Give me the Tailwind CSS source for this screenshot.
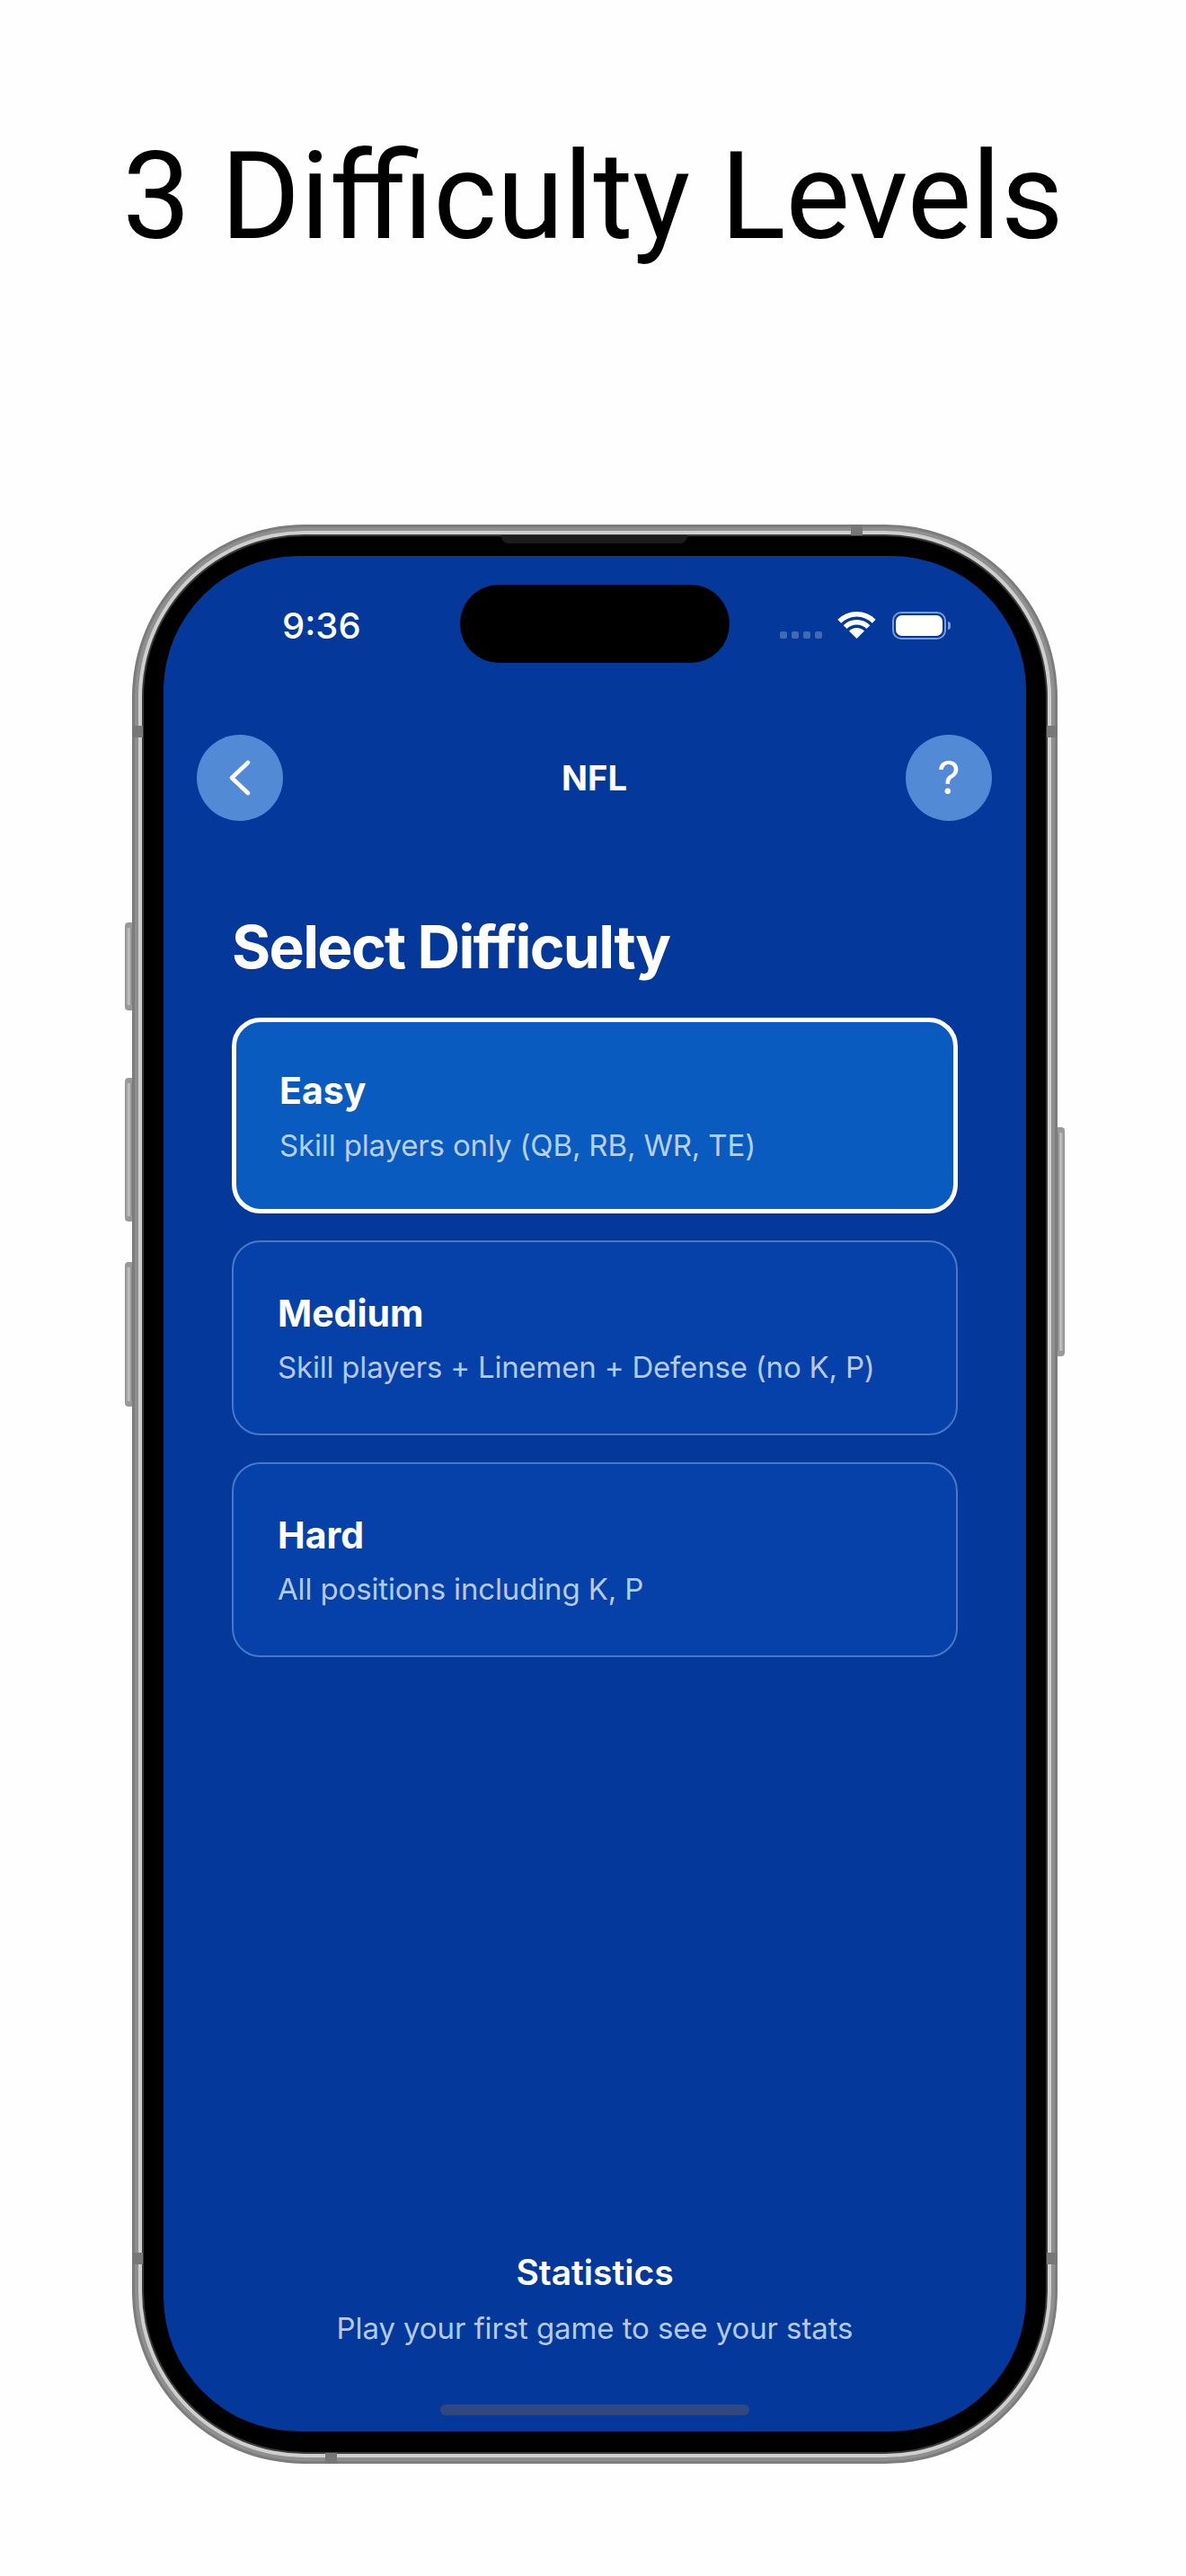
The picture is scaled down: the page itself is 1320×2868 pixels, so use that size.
<!DOCTYPE html>
<html>
<head>
<meta charset="utf-8">
<script src="https://cdn.jsdelivr.net/npm/@tailwindcss/browser@4"></script>
</head>
<body class="bg-[#fefefe] m-0">
<div class="w-[1320px] h-[2868px] overflow-hidden font-['Inter',sans-serif]">
  <div class="h-[584px] pt-[139px]">
    <h1 class="text-center font-['Roboto',sans-serif] font-normal text-[135px] leading-[160px] text-black">3 Difficulty Levels</h1>
  </div>

  <div class="relative ml-[147px] w-[1030px] h-[2159px]">
    <!-- side buttons -->
    <div class="absolute left-[-8px] top-[443px] w-[9px] h-[98px] rounded-l-[4px] bg-gradient-to-r from-[#8a8a8a] via-[#c4c4c4] to-[#6f6f6f] border-y-[6px] border-[#999]"></div>
    <div class="absolute left-[-8px] top-[616px] w-[9px] h-[160px] rounded-l-[4px] bg-gradient-to-r from-[#8a8a8a] via-[#c4c4c4] to-[#6f6f6f] border-y-[6px] border-[#999]"></div>
    <div class="absolute left-[-8px] top-[821px] w-[9px] h-[161px] rounded-l-[4px] bg-gradient-to-r from-[#8a8a8a] via-[#c4c4c4] to-[#6f6f6f] border-y-[6px] border-[#999]"></div>
    <div class="absolute right-[-8px] top-[671px] w-[9px] h-[255px] rounded-r-[4px] bg-gradient-to-l from-[#8a8a8a] via-[#c4c4c4] to-[#6f6f6f] border-y-[6px] border-[#999]"></div>

    <!-- titanium frame: nested rings -->
    <div class="relative h-full rounded-[192px] bg-[#7c7c7c] p-[3px]">
      <div class="h-full rounded-[189px] bg-[#8f8f8f] p-[4px]">
        <div class="h-full rounded-[185px] bg-[#cfcfcf] p-[4px]">
          <div class="h-full rounded-[181px] bg-[#3a3a3a] p-[2px]">
            <div class="h-full rounded-[179px] bg-black p-[22px]">

              <!-- screen -->
              <div class="relative h-[2088px] rounded-[150px] overflow-hidden bg-[#04399b] text-white">
                <!-- dynamic island -->
                <div class="absolute left-[330px] top-[32px] w-[300px] h-[87px] rounded-full bg-black"></div>

                <!-- status bar -->
                <div class="h-[199px] pt-[55px] pl-[132px] pr-[84px] flex justify-between items-start">
                  <span class="text-[40px] leading-[46px] font-medium text-white">9:36</span>
                  <div class="flex items-end gap-[17px] mt-[6px] h-[32px]">
                    <div class="flex gap-[5px] mb-[1px]">
                      <i class="block w-[8px] h-[8px] rounded-[2px] bg-[#4169b4]"></i>
                      <i class="block w-[8px] h-[8px] rounded-[2px] bg-[#4169b4]"></i>
                      <i class="block w-[8px] h-[8px] rounded-[2px] bg-[#4169b4]"></i>
                      <i class="block w-[8px] h-[8px] rounded-[2px] bg-[#4169b4]"></i>
                    </div>
                    <svg width="43" height="32" viewBox="-1 0 43 32" class="block">
                      <path d="M-0.7 9.8 A30 30 0 0 1 41.7 9.8 L37.8 13.7 A24.5 24.5 0 0 0 3.2 13.7 Z" fill="#fff"/>
                      <path d="M5.65 16.15 A21 21 0 0 1 35.35 16.15 L31.46 20.04 A15.5 15.5 0 0 0 9.54 20.04 Z" fill="#fff"/>
                      <path d="M12 22.5 A12 12 0 0 1 29 22.5 L20.5 31 Z" fill="#fff"/>
                    </svg>
                    <div class="flex items-center gap-[2px] ml-[1px]">
                      <div class="w-[60px] h-[31px] rounded-[10px] border-[2px] border-[#7b9bd3] p-[2px]">
                        <div class="h-full rounded-[7px] bg-white"></div>
                      </div>
                      <div class="w-[3px] h-[9px] rounded-r-[3px] bg-[#7b9bd3]"></div>
                    </div>
                  </div>
                </div>

                <!-- nav -->
                <div class="h-[96px] pl-[37px] pr-[38px] flex items-center justify-between">
                  <div class="w-[96px] h-[96px] rounded-full bg-[#528ad6] flex items-center justify-center">
                    <svg width="24" height="40" viewBox="0 0 24 40" fill="none" stroke="#fff" stroke-width="4.5" stroke-linecap="round" stroke-linejoin="round"><path d="M21 3 L3 20 L21 37"/></svg>
                  </div>
                  <span class="text-[38px] leading-[44px] font-bold">NFL</span>
                  <div class="w-[96px] h-[96px] rounded-full bg-[#528ad6] flex items-center justify-center text-[50px] leading-[50px] font-normal">?</div>
                </div>

                <!-- content -->
                <div class="mt-[104px] px-[76px]">
                  <h2 class="text-[66px] leading-[72px] font-bold tracking-[-1.7px]">Select Difficulty</h2>
                  <div class="mt-[43px] flex flex-col gap-[30px]">
                    <div class="h-[218px] rounded-[32px] border-[5px] border-white bg-[#0a5bbf] pl-[48px] flex flex-col justify-center">
                      <div class="text-[41px] leading-[48px] font-bold">Easy</div>
                      <div class="mt-[17px] text-[33px] leading-[40px] tracking-[-0.15px] text-[#b9cfee]">Skill players only (QB, RB, WR, TE)</div>
                    </div>
                    <div class="h-[217px] rounded-[32px] border-[2px] border-[#4a78c8] bg-[#0541a9] pl-[49px] flex flex-col justify-center">
                      <div class="text-[41px] leading-[48px] font-bold">Medium</div>
                      <div class="mt-[16px] text-[33px] leading-[40px] tracking-[-0.2px] text-[#b5c9ea]">Skill players + Linemen + Defense (no K, P)</div>
                    </div>
                    <div class="h-[217px] rounded-[32px] border-[2px] border-[#4a78c8] bg-[#0541a9] pl-[49px] flex flex-col justify-center">
                      <div class="text-[41px] leading-[48px] font-bold">Hard</div>
                      <div class="mt-[16px] text-[33px] leading-[40px] tracking-[-0.15px] text-[#b5c9ea]">All positions including K, P</div>
                    </div>
                  </div>
                </div>

                <!-- statistics -->
                <div class="absolute left-0 right-0 top-[1888px] text-center">
                  <div class="text-[39px] leading-[46px] font-semibold">Statistics</div>
                  <div class="mt-[19px] text-[33px] leading-[40px] tracking-[-0.1px] text-[#b5c9ea]">Play your first game to see your stats</div>
                </div>

                <!-- home indicator -->
                <div class="absolute left-[308px] top-[2058px] w-[344px] h-[12px] rounded-full bg-[#33477f]"></div>
              </div>
            </div>
          </div>
        </div>
      </div>
    </div>

    <!-- antenna bands and speaker -->
    <div class="absolute left-0 top-[224px] w-[12px] h-[13px] bg-[#777]"></div>
    <div class="absolute right-0 top-[224px] w-[12px] h-[13px] bg-[#777]"></div>
    <div class="absolute left-0 top-[1924px] w-[12px] h-[13px] bg-[#777]"></div>
    <div class="absolute right-0 top-[1924px] w-[12px] h-[13px] bg-[#777]"></div>
    <div class="absolute left-[800px] top-0 w-[13px] h-[12px] bg-[#777]"></div>
    <div class="absolute left-[215px] bottom-0 w-[13px] h-[12px] bg-[#777]"></div>
    <div class="absolute left-[411px] top-[12px] w-[207px] h-[9px] rounded-b-[8px] bg-[#1c1c1c]"></div>
  </div>
</div>
</body>
</html>
